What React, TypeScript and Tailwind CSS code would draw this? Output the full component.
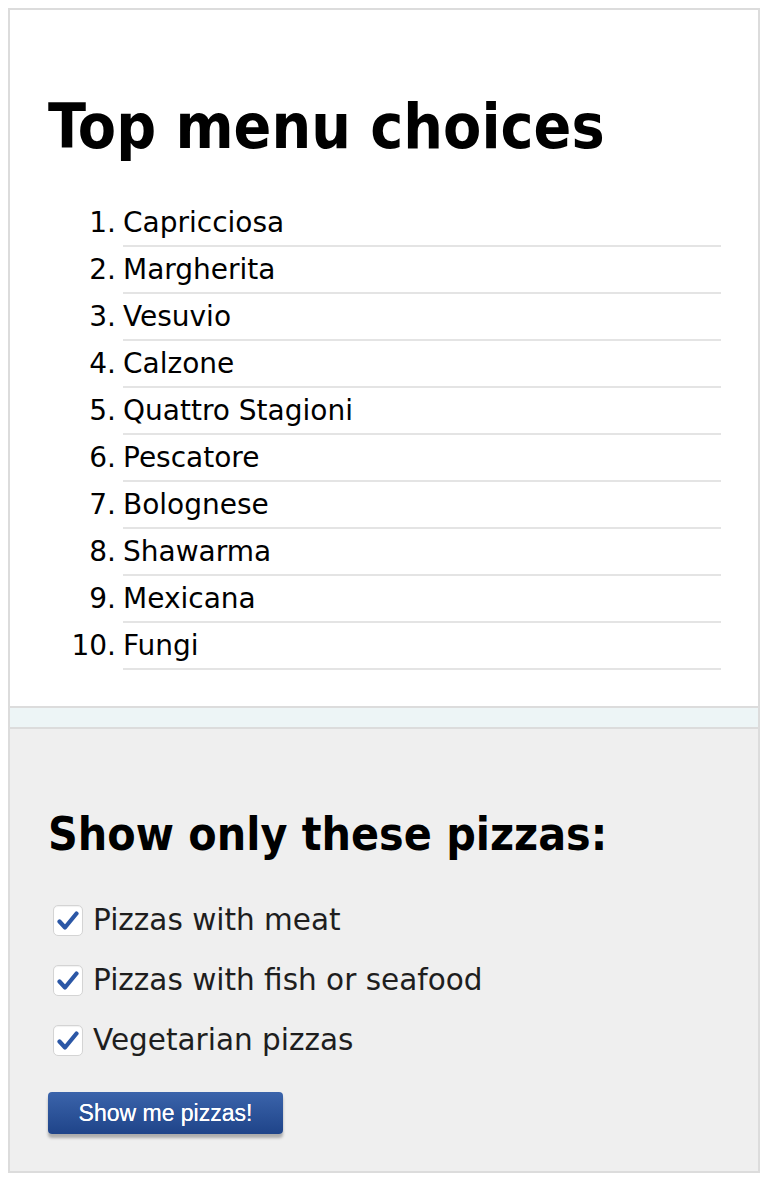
const pizzas = [
  'Capricciosa',
  'Margherita',
  'Vesuvio',
  'Calzone',
  'Quattro Stagioni',
  'Pescatore',
  'Bolognese',
  'Shawarma',
  'Mexicana',
  'Fungi',
];

const filters = ['Pizzas with meat', 'Pizzas with fish or seafood', 'Vegetarian pizzas'];

function Check() {
  return (
    <span className="flex h-[31px] w-[30px] shrink-0 items-center justify-center rounded-[5px] border border-[#d4d4d4] bg-white shadow-[inset_0_1px_1px_rgba(0,0,0,0.06)]">
      <svg width="22" height="20" viewBox="0 0 22 20" fill="none">
        <path
          d="M2.5 10.5 L8 16.5 L19.5 2.5"
          stroke="#2b57a6"
          strokeWidth="4.2"
          strokeLinecap="round"
          strokeLinejoin="round"
        />
      </svg>
    </span>
  );
}

export default function App() {
  return (
    <div className="min-h-[1180px] bg-white pt-2 pl-2 font-['DejaVu_Sans',sans-serif]">
      <div className="w-[752px] border-2 border-[#dcdcdc]">
        {/* top choices */}
        <section className="bg-white pt-[86px] pb-[36px] pl-[38px] pr-[37px]">
          <h1 className="font-['DejaVu_Sans_Condensed','DejaVu_Sans',sans-serif] text-[62px] font-bold leading-none text-black">
            Top menu choices
          </h1>
          <ol className="mt-[42px]">
            {pizzas.map((name, i) => (
              <li key={name} className="flex text-[28px] leading-[45px] text-black">
                <span className="w-[75px] shrink-0 pr-[7px] text-right">{i + 1}.</span>
                <span className="flex-1 border-b-2 border-[#e4e4e4]">{name}</span>
              </li>
            ))}
          </ol>
        </section>

        <div className="h-[23px] border-y-2 border-[#dcdcdc] bg-[#edf5f6]" />

        {/* filters */}
        <section className="bg-[#efefef] pt-[82px] pb-[37px] pl-[38px]">
          <h2 className="font-['DejaVu_Sans_Condensed','DejaVu_Sans',sans-serif] text-[46px] font-bold leading-none text-black">
            Show only these pizzas:
          </h2>
          <div className="mt-[48px] flex flex-col gap-[29px] pl-[5px]">
            {filters.map((f) => (
              <label key={f} className="flex items-center gap-[10px] text-[29.5px] leading-[31px] text-[#1e1e1e]">
                <Check />
                {f}
              </label>
            ))}
          </div>
          <button className="mt-[36px] h-[42px] w-[235px] rounded-[4px] bg-gradient-to-b from-[#3b64ab] to-[#1f4489] font-['Liberation_Sans',sans-serif] text-[23px] text-white shadow-[0_4px_3px_rgba(0,0,0,0.28)] [text-shadow:0_0_0.6px_#fff]">
            Show me pizzas!
          </button>
        </section>
      </div>
    </div>
  );
}
